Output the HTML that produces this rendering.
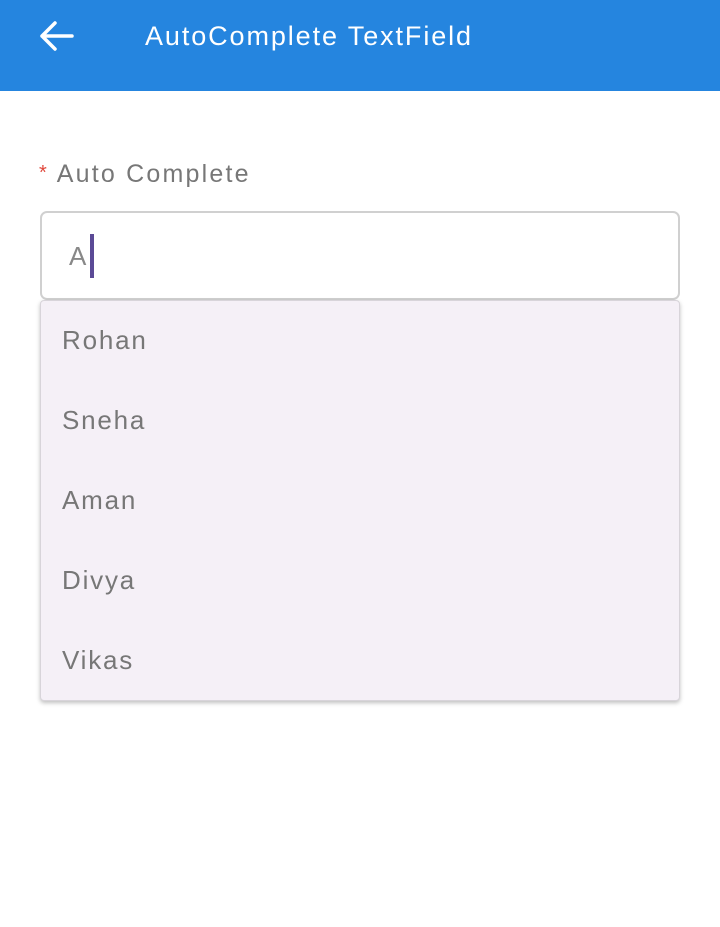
<!DOCTYPE html>
<html><head><style>
body{margin:0;width:720px;height:927px;background:#fff;font-family:"Liberation Sans",sans-serif;position:relative;overflow:hidden}
.hdr{position:absolute;left:0;top:0;width:720px;height:91px;background:#2585df}
.title{position:absolute;left:145px;top:19px;color:#fff;font-size:27px;letter-spacing:1.9px;line-height:34px}
.lbl{position:absolute;left:39px;top:160px;font-size:25px;color:#777;letter-spacing:2.2px}
.lbl span{color:#e0483c;font-size:20px;margin-right:10px;position:relative;top:-3px;letter-spacing:0}
.inp{position:absolute;left:40px;top:211px;width:636px;height:85px;border:2px solid #d0d0d0;border-radius:7px}
.inp .t{position:absolute;left:27px;top:28px;font-size:26px;color:#888}
.inp .c{position:absolute;left:48px;top:21px;width:4px;height:44px;background:#5b4a96}
.dd{position:absolute;left:40px;top:300px;width:638px;height:399px;background:#f5f0f7;border:1px solid #d8d4da;border-radius:4px;box-shadow:0 2px 4px rgba(0,0,0,.25)}
.it{position:absolute;left:21px;font-size:26px;color:#777;letter-spacing:1.8px}
</style></head><body>
<div class="hdr">
<svg style="position:absolute;left:38px;top:20px" width="36" height="32" viewBox="0 0 36 32"><path d="M17 3 L4 16 L17 29 M4 16 H34" stroke="#fff" stroke-width="3.5" fill="none" stroke-linecap="round" stroke-linejoin="round"/></svg>
<div class="title">AutoComplete TextField</div>
</div>
<div class="lbl"><span>*</span>Auto Complete</div>
<div class="inp"><div class="t">A</div><div class="c"></div></div>
<div class="dd">
<div class="it" style="top:24px">Rohan</div>
<div class="it" style="top:104px">Sneha</div>
<div class="it" style="top:184px">Aman</div>
<div class="it" style="top:264px">Divya</div>
<div class="it" style="top:344px">Vikas</div>
</div>
</body></html>
